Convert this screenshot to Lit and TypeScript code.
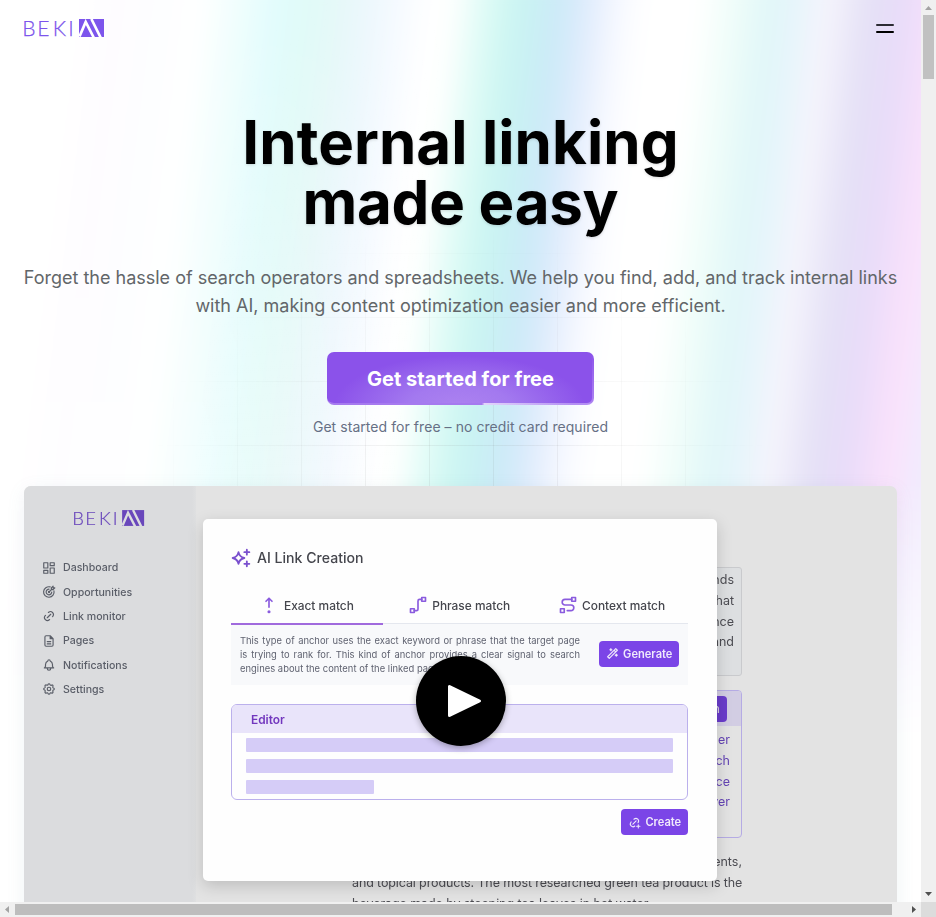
import { LitElement, html, css, svg } from "lit";
import { customElement } from "lit/decorators.js";

const icons: Record<string, unknown> = {
  dashboard: svg`<rect x="3" y="3" width="7" height="9"/><rect x="14" y="3" width="7" height="5"/><rect x="14" y="12" width="7" height="9"/><rect x="3" y="16" width="7" height="5"/>`,
  target: svg`<path d="M20.5 10a9 9 0 1 1-6.5-6.7M16.7 12a4.8 4.8 0 1 1-4.7-4.8"/><circle cx="12" cy="12" r="1"/><path d="M12 12l5-5M16 8V5l3-3v3h3l-3 3z"/>`,
  link: svg`<path d="M9 15l6-6M11 6l.5-.5a5 5 0 0 1 7 7l-.5.5M13 18l-.4.5a5 5 0 0 1-7.1-7l.5-.5"/>`,
  page: svg`<path d="M14 3v5h5M17 21H7a2 2 0 0 1-2-2V5a2 2 0 0 1 2-2h7l5 5v11a2 2 0 0 1-2 2zM9 13h6M9 17h6"/>`,
  bell: svg`<path d="M10 5a2 2 0 1 1 4 0 7 7 0 0 1 4 6v3a4 4 0 0 0 2 3H4a4 4 0 0 0 2-3v-3a7 7 0 0 1 4-6M9 17v1a3 3 0 0 0 6 0v-1"/>`,
  gear: svg`<path d="M10.3 4.3c.4-1.8 3-1.8 3.4 0a1.7 1.7 0 0 0 2.6 1.1c1.5-1 3.3.8 2.4 2.4a1.7 1.7 0 0 0 1 2.5c1.8.4 1.8 3 0 3.4a1.7 1.7 0 0 0-1 2.6c.9 1.5-.9 3.3-2.4 2.4a1.7 1.7 0 0 0-2.6 1c-.4 1.8-3 1.8-3.4 0a1.7 1.7 0 0 0-2.6-1c-1.5.9-3.3-.9-2.4-2.4a1.7 1.7 0 0 0-1-2.6c-1.8-.4-1.8-3 0-3.4a1.7 1.7 0 0 0 1-2.6c-.9-1.5.9-3.3 2.4-2.4 1 .6 2.3.1 2.6-1z"/><circle cx="12" cy="12" r="3"/>`,
  sparkle: svg`<path d="M9 5c.8 4 3 6.200 7 7-4 .8-6.200 3-7 7-.8-4-3-6.200-7-7 4-.8 6.200-3 7-7z"/><path d="M19 2v6M16 5h6M19 16v6M16 19h6"/>`,
  arrow: svg`<path d="M12 15V3M16 7l-4-4-4 4"/><circle cx="12" cy="21" r="1"/>`,
  phrase: svg`<rect x="2" y="17" width="5" height="5"/><rect x="17" y="2" width="5" height="5"/><path d="M7 19.500h3a2 2 0 0 0 2-2v-11a2 2 0 0 1 2-2h3"/>`,
  context: svg`<rect x="2" y="17" width="5" height="5"/><rect x="17" y="2" width="5" height="5"/><path d="M17 4.500H8a3.750 3.750 0 0 0 0 7.500h8a3.750 3.750 0 0 1 0 7.500h-5"/>`,
  wand: svg`<path d="M6 21L21 6l-3-3L3 18zM15 6l3 3M9 3a2 2 0 0 0 2 2 2 2 0 0 0-2 2 2 2 0 0 0-2-2 2 2 0 0 0 2-2M19 13a2 2 0 0 0 2 2 2 2 0 0 0-2 2 2 2 0 0 0-2-2 2 2 0 0 0 2-2"/>`,
  linkplus: svg`<path d="M9 15l6-6M11 6l.5-.5a5 5 0 0 1 7 7M12.600 18.500a5 5 0 0 1-7.100-7l.5-.5M16 19h6M19 16v6"/>`,
};

const icon = (name: string) => html`<svg class="icon ${name}" viewBox="0 0 24 24">${icons[name]}</svg>`;

@customElement("beki-logo")
class BekiLogo extends LitElement {
  static styles = css`
    :host { display: block; width: 83px; height: 20px; margin-left: -2px; }
    svg { display: block; width: 100%; height: 100%; overflow: visible; }
    text { font-family: Lato, sans-serif; font-weight: 300; font-size: 21px; fill: var(--logo, #7d55ec); stroke: var(--logo, #7d55ec); stroke-width: .25; }
    .mark { fill: var(--logo, #7d55ec); }
    .cut { fill: none; stroke: var(--logo-cut, #fff); stroke-width: 2.700; }
  `;
  render() {
    return html`<svg viewBox="-2 0 83 20">
      <text x="-1.700 13.200 28.800 44.300" y="17.500">BEKI</text>
      <rect class="mark" x="55" y="1" width="25" height="18"/>
      <path class="cut" d="M55.500 18.500L61.700 4L69.700 19.500M67.400 1L76.600 19.500"/>
    </svg>`;
  }
}

@customElement("video-preview")
class VideoPreview extends LitElement {
  static styles = css`
    * { box-sizing: border-box; }
    :host {
      display: grid; grid-template-columns: 172px 1fr; position: relative; width: 873px; height: 500px;
      overflow: hidden; background: #e3e3e3; border-radius: 7px; color: #45464d;
      font-family: Inter, "Liberation Sans", sans-serif;
      --logo: #6947bb; --logo-cut: #dcdddf;
    }
    .side > *, .article, .title, .tabs, .lines, .btn, .editor { filter: blur(.35px); }
    .icon { display: block; width: 14px; height: 14px; fill: none; stroke: currentColor; stroke-width: 2; stroke-linecap: round; stroke-linejoin: round; flex: none; }
    .side { background: linear-gradient(90deg, #dbdcde 168px, #dfe0e1); padding: 22px 0 0 18px; }
    beki-logo { width: 73px; height: 20px; margin: 0 0 27.500px 30px; }
    .item { display: flex; align-items: center; gap: 7px; height: 24.350px; font-size: 10.600px; font-weight: 500; color: #5a5e68; }
    .article { width: 390px; margin: 81px 0 0 156px; font-size: 12.500px; line-height: 20.800px; color: #4c4c52; text-align: right; white-space: nowrap; }
    .para { height: 109px; padding: 2px 7px; border: 1px solid #c9cacd; border-radius: 3px; background: #dddfe1; }
    .quote { height: 148px; margin: 14px 0; border: 1px solid #b5abe4; border-radius: 4px; color: #6444b4; overflow: hidden; }
    .qhead { height: 35px; display: flex; justify-content: flex-end; align-items: center; padding-right: 14px; background: #d2cde3; }
    .copy { width: 60px; height: 26px; border-radius: 4px; background: #6a3ccb; color: #ddd; text-align: right; padding: 3px 7px; }
    .qtext { padding: 4px 11px; }
    .row { height: 20.800px; }
    .row.full { letter-spacing: -0.120px; }
    .row.start { text-align: left; letter-spacing: -0.090px; }
    .modal {
      position: absolute; left: 178.500px; top: 33px; width: 514.500px; height: 362px; border-radius: 5px;
      background: #fefefe; padding: 0 29px 0 28.500px; box-shadow: 0 5px 16px rgba(0, 0, 0, .17);
    }
    .title { display: flex; align-items: center; gap: 6px; margin-top: 28.500px; height: 20px; font-size: 14.100px; font-weight: 500; }
    .title .icon { width: 20px; height: 20px; color: #7a50ce; stroke-width: 2.200; }
    .tabs { position: relative; z-index: 1; display: grid; grid-template-columns: repeat(3, 1fr); height: 37px; margin-top: 19.500px; border-bottom: 1px solid #e4e7ee; }
    .tab { display: flex; align-items: center; justify-content: center; gap: 5.500px; height: 38px; font-size: 11.900px; font-weight: 500; border-bottom: 2px solid transparent; white-space: nowrap; }
    .tab.on { border-color: #a06add; }
    .tab .icon { width: 18px; height: 18px; color: #8a5bde; stroke-width: 2.200; }
    .info { display: flex; align-items: center; justify-content: space-between; height: 61px; padding: 0 9px; background: #f8f9fb; font-size: 9.400px; line-height: 14px; color: #5f6270; }
    .lines { width: 340px; white-space: nowrap; }
    .lines div { text-align-last: justify; }
    .lines .last { text-align-last: left; letter-spacing: .03px; }
    .btn { display: flex; align-items: center; justify-content: center; gap: 4.500px; width: 80px; height: 26px; border-radius: 4px; background: #7b45e7; color: #f0eafc; font-size: 11.100px; line-height: 14px; font-weight: 600; }
    .info .btn { margin-top: -2px; }
    .btn .icon { width: 13px; height: 13px; }
    .editor { height: 96px; margin-top: 19px; border: 1px solid #bbb0ec; border-radius: 6px; overflow: hidden; }
    .ehead { height: 28px; padding-left: 19px; background: #e9e4fa; color: #7237be; font-size: 11.900px; line-height: 30px; font-weight: 600; }
    .bars { display: grid; gap: 7px; padding: 5px 14px; }
    .bar { height: 14px; background: #d5ccf7; border-radius: 1px; }
    .bar.short { width: 128px; }
    .create { width: 67px; margin: 9px 0 0 auto; }
    .play { position: absolute; left: 392px; top: 170px; width: 90px; height: 90px; border-radius: 50%; background: #000; box-shadow: 0 2px 6px rgba(0, 0, 0, .3); z-index: 2; }
    .play svg { display: block; width: 90px; height: 90px; fill: #fff; stroke: #fff; stroke-width: 3; stroke-linejoin: round; }
  `;
  render() {
    const nav = [["dashboard", "Dashboard"], ["target", "Opportunities"], ["link", "Link monitor"], ["page", "Pages"], ["bell", "Notifications"], ["gear", "Settings"]];
    const tabs = [["arrow", "Exact match"], ["phrase", "Phrase match"], ["context", "Context match"]];
    return html`
      <div class="side">
        <beki-logo></beki-logo>
        ${nav.map(([i, t]) => html`<div class="item">${icon(i)}<span>${t}</span></div>`)}
      </div>
      <div class="article">
        <div class="para">${["trends", "that", "since", "and"].map((t) => html`<div class="row">${t}</div>`)}</div>
        <div class="quote">
          <div class="qhead"><div class="copy">n</div></div>
          <div class="qtext">${["other", "each", "place", "over"].map((t) => html`<div class="row">${t}</div>`)}</div>
        </div>
        <div class="row">ingredients,</div>
        <div class="row full">and topical products. The most researched green tea product is the</div>
        <div class="row start">beverage made by steeping tea leaves in hot water.</div>
      </div>
      <div class="modal">
        <div class="title">${icon("sparkle")}<span>AI Link Creation</span></div>
        <div class="tabs">${tabs.map(([i, t], n) => html`<div class="tab ${n === 0 ? "on" : ""}">${icon(i)}<span>${t}</span></div>`)}</div>
        <div class="info">
          <div class="lines">
            <div>This type of anchor uses the exact keyword or phrase that the target page</div>
            <div>is trying to rank for. This kind of anchor provides a clear signal to search</div>
            <div class="last">engines about the content of the linked page.</div>
          </div>
          <div class="btn">${icon("wand")}<span>Generate</span></div>
        </div>
        <div class="editor">
          <div class="ehead">Editor</div>
          <div class="bars"><div class="bar"></div><div class="bar"></div><div class="bar short"></div></div>
        </div>
        <div class="btn create">${icon("linkplus")}<span>Create</span></div>
      </div>
      <div class="play"><svg viewBox="0 0 90 90"><path d="M33.500 30.500V59.500L63.500 45z"/></svg></div>
    `;
  }
}

@customElement("app-root")
class AppRoot extends LitElement {
  static styles = css`
    * { box-sizing: border-box; }
    :host { display: grid; grid-template-columns: 921px 15px; grid-template-rows: 902px 15px; width: 936px; height: 917px; overflow: hidden; background: #fff; font-family: Inter, "Liberation Sans", sans-serif; }
    .page { position: relative; overflow: hidden; padding: 0 24px; isolation: isolate; }
    .aurora {
      position: absolute; inset: -20px -40px 0 -40px; z-index: -2; filter: blur(10px);
      background: linear-gradient(97deg, #fff 0, #fff 118px, #fefcff 155px, #fdfeff 208px, #fff 240px, #eefefd 285px, #e2fcfd 315px, #e0fbf8 343px, #e4f9f7 370px, #ebf7fc 402px, #f5faff 435px, #fff 470px, #fdfffe 492px, #e2fcf7 520px, #cdf6f2 550px, #c9f0f4 575px, #cfe9f9 602px, #e5eefd 632px, #f7f9ff 658px, #fff 685px, #fff 735px, #f2fefa 765px, #e1f7f8 805px, #e5f5fb 828px, #f5f4fc 864px, #e5e1f6 905px, #e8dcf9 937px, #f9e1fb 978px, #f9e4fc 988px, #f1eafd 1010px, #f2efff 1040px);
      mask-image: linear-gradient(#000 500px, transparent 760px);
    }
    .fade { position: absolute; inset: 0; z-index: -2; background: linear-gradient(97deg, rgba(255, 255, 255, .4) 250px, transparent 450px); mask-image: linear-gradient(transparent 0, #000 480px); }
    .lattice {
      position: absolute; inset: 0; z-index: -1;
      background: linear-gradient(90deg, rgba(128, 128, 128, .11) 1px, transparent 1px) 45px 0 / 64px 64px, linear-gradient(rgba(128, 128, 128, .11) 1px, transparent 1px) 0 61px / 64px 64px;
      mask-image: radial-gradient(ellipse 310px 270px at 460px 490px, #000 25%, transparent 100%);
    }
    header { display: flex; justify-content: space-between; height: 56px; padding: 18px 3px 0 0; }
    .menu { display: grid; gap: 5px; align-content: start; padding-top: 6px; }
    .menu i { width: 18px; height: 2px; background: #000; border-radius: 1px; }
    .menu i:first-child { background: #2b2b33; }
    h1 { margin: 56px 0 0; font-size: 60px; line-height: 60px; font-weight: 700; letter-spacing: .08px; color: #000; text-align: center; text-shadow: 0 1px 3px rgba(0, 0, 0, .14); white-space: nowrap; }
    h1 span { display: block; }
    h1 span + span { letter-spacing: -0.250px; }
    .lead { margin: 32px -10px 0; font-size: 18px; line-height: 28px; color: #626669; text-align: center; white-space: nowrap; }
    .cta {
      display: flex; align-items: center; justify-content: center; width: 267px; height: 53px; margin: 32px auto 0; border-radius: 7px;
      padding: 2px 0 0 2px; font-size: 20px; letter-spacing: .04px; font-weight: 700; color: #fff; white-space: nowrap; border: solid transparent; border-width: 0 2px 2px 0;
      background: radial-gradient(ellipse 125px 50px at 50% 105%, #ac82f0 0, #a379ef 40%, transparent 100%) padding-box, linear-gradient(#8b52ea, #8b52ea) padding-box,
        linear-gradient(90deg, #a67aef 58%, #e3d6fb 59%, #b48ff3 92%) bottom / 100% 2px no-repeat border-box, linear-gradient(#8b52ea, #ae84f2) border-box;
    }
    .note { margin: 12px 0 0; font-size: 14px; line-height: 20px; letter-spacing: .06px; color: #667085; text-align: center; white-space: nowrap; }
    video-preview { margin-top: 49px; }
    .shade { box-shadow: 0 4px 18px rgba(110, 160, 170, .1); }
    .v, .h { display: flex; background: #f0f0f0; }
    .v { flex-direction: column; align-items: center; }
    .v svg, .h svg { display: block; width: 15px; height: 15px; fill: #a3a3a3; flex: none; }
    .v .dark, .h .dark { fill: #505050; }
    .v b { width: 11px; height: 64px; background: #c1c1c1; }
    .h { align-items: center; }
    .h b { width: 877px; height: 11px; background: #bdbdbd; }
    .v .dark, .h .dark { margin: auto 0 0 auto; }
    .corner { background: #dcdcdc; }
  `;
  render() {
    return html`
      <div class="page">
        <div class="aurora"></div><div class="fade"></div><div class="lattice"></div>
        <header><beki-logo></beki-logo><div class="menu"><i></i><i></i></div></header>
        <h1><span>Internal linking</span><span>made easy</span></h1>
        <p class="lead">Forget the hassle of search operators and spreadsheets. We help you find, add, and track internal links<br>with AI, making content optimization easier and more efficient.</p>
        <div class="cta">Get started for free</div>
        <p class="note">Get started for free – no credit card required</p>
        <video-preview class="shade"></video-preview>
      </div>
      <div class="v">
        <svg viewBox="0 0 15 15"><path d="M4 10h7L7.500 6z"/></svg><b></b>
        <svg class="dark" viewBox="0 0 15 15"><path d="M4 5h7L7.500 9z"/></svg>
      </div>
      <div class="h">
        <svg viewBox="0 0 15 15"><path d="M9 4v7L5 7.500z"/></svg><b></b>
        <svg class="dark" viewBox="0 0 15 15"><path d="M6 4v7L10 7.500z"/></svg>
      </div>
      <div class="corner"></div>
    `;
  }
}
